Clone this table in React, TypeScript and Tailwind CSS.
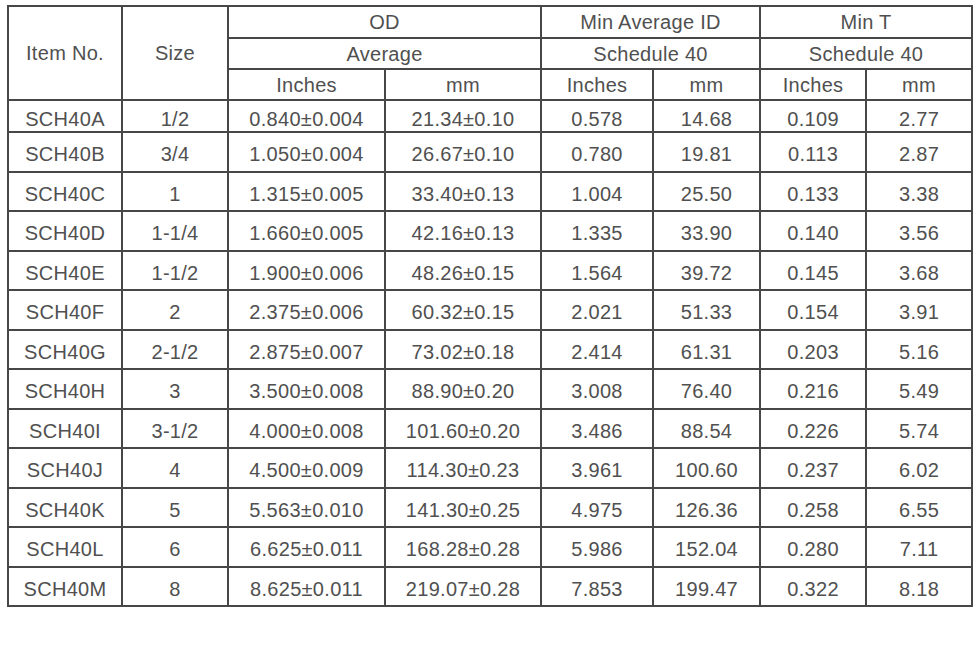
import React from "react";

const rows: string[][] = [
  ["SCH40A", "1/2", "0.840±0.004", "21.34±0.10", "0.578", "14.68", "0.109", "2.77"],
  ["SCH40B", "3/4", "1.050±0.004", "26.67±0.10", "0.780", "19.81", "0.113", "2.87"],
  ["SCH40C", "1", "1.315±0.005", "33.40±0.13", "1.004", "25.50", "0.133", "3.38"],
  ["SCH40D", "1-1/4", "1.660±0.005", "42.16±0.13", "1.335", "33.90", "0.140", "3.56"],
  ["SCH40E", "1-1/2", "1.900±0.006", "48.26±0.15", "1.564", "39.72", "0.145", "3.68"],
  ["SCH40F", "2", "2.375±0.006", "60.32±0.15", "2.021", "51.33", "0.154", "3.91"],
  ["SCH40G", "2-1/2", "2.875±0.007", "73.02±0.18", "2.414", "61.31", "0.203", "5.16"],
  ["SCH40H", "3", "3.500±0.008", "88.90±0.20", "3.008", "76.40", "0.216", "5.49"],
  ["SCH40I", "3-1/2", "4.000±0.008", "101.60±0.20", "3.486", "88.54", "0.226", "5.74"],
  ["SCH40J", "4", "4.500±0.009", "114.30±0.23", "3.961", "100.60", "0.237", "6.02"],
  ["SCH40K", "5", "5.563±0.010", "141.30±0.25", "4.975", "126.36", "0.258", "6.55"],
  ["SCH40L", "6", "6.625±0.011", "168.28±0.28", "5.986", "152.04", "0.280", "7.11"],
  ["SCH40M", "8", "8.625±0.011", "219.07±0.28", "7.853", "199.47", "0.322", "8.18"],
];

const cell = "border-2 border-[#474747] text-center align-middle p-0 font-normal leading-[22px]";

export default function App() {
  return (
    <div
      className="w-[979px] h-[646px] bg-white pt-[5px] pl-[7px]"
      style={{ fontFamily: '"Liberation Sans", Arial, sans-serif' }}
    >
      <table className="table-fixed border-collapse text-[20px] tracking-[0.3px] text-[#505050] w-[964px]">
        <colgroup>
          <col className="w-[114px]" />
          <col className="w-[106px]" />
          <col className="w-[157px]" />
          <col className="w-[156px]" />
          <col className="w-[112px]" />
          <col className="w-[107px]" />
          <col className="w-[106px]" />
          <col className="w-[106px]" />
        </colgroup>
        <thead>
          <tr className="h-[32px]">
            <th rowSpan={3} className={cell}>Item No.</th>
            <th rowSpan={3} className={cell}>Size</th>
            <th colSpan={2} className={cell}>OD</th>
            <th colSpan={2} className={cell}>Min Average ID</th>
            <th colSpan={2} className={cell}>Min T</th>
          </tr>
          <tr className="h-[31px]">
            <th colSpan={2} className={cell}>Average</th>
            <th colSpan={2} className={cell}>Schedule 40</th>
            <th colSpan={2} className={cell}>Schedule 40</th>
          </tr>
          <tr className="h-[31px]">
            <th className={cell}>Inches</th>
            <th className={cell}>mm</th>
            <th className={cell}>Inches</th>
            <th className={cell}>mm</th>
            <th className={cell}>Inches</th>
            <th className={cell}>mm</th>
          </tr>
        </thead>
        <tbody>
          {rows.map((r, i) => (
            <tr key={r[0]} className={i === 0 ? "h-[32px]" : "h-[39.5px]"}>
              {r.map((v, j) => (
                <td key={j} className={`${cell} pt-[5px]`}>
                  {v}
                </td>
              ))}
            </tr>
          ))}
        </tbody>
      </table>
    </div>
  );
}
